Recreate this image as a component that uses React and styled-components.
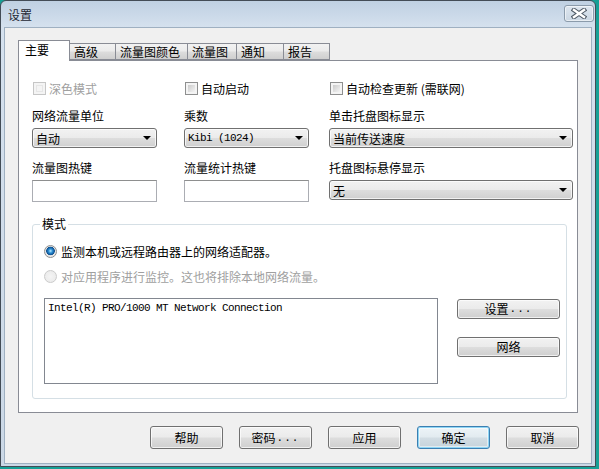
import React from 'react';
import styled, { createGlobalStyle, css } from 'styled-components';

const GlobalStyle = createGlobalStyle`
  html, body {
    margin: 0;
    padding: 0;
    background: #16a096;
  }
  body {
    font-family: "Noto Sans CJK SC", "Noto Sans", sans-serif;
    font-size: 12px;
    color: #000;
  }
  * { box-sizing: border-box; }
`;

const CJK = `"Noto Sans CJK SC", "Noto Sans", sans-serif`;
const MONO = `"Liberation Mono", "DejaVu Sans Mono", monospace`;

const btnFace = css`
  border: 1px solid #707070;
  border-radius: 3px;
  background: linear-gradient(#f2f2f2 0%, #ebebeb 48%, #dddddd 52%, #cfcfcf 100%);
  box-shadow: inset 0 0 0 1px rgba(255, 255, 255, 0.7);
`;

const Window = styled.div`
  width: 596px;
  height: 467px;
  border: 1px solid #434c56;
  border-radius: 6px 6px 0 0;
  background: linear-gradient(#bfd0e2 0px, #d5e1ee 26px, #cbd8e6 100%);
  padding: 0 3px 2px 3px;
  display: flex;
  flex-direction: column;
`;

const TitleBar = styled.div`
  height: 26px;
  display: flex;
  justify-content: space-between;
  align-items: flex-start;
  padding-left: 4px;
`;

const Title = styled.div`
  line-height: 16px;
  margin-top: 6px;
  color: #1e2833;
`;

const CloseBtn = styled.div`
  width: 30px;
  height: 17px;
  margin-top: 4px;
  margin-right: -2px;
  border: 1px solid #8b9bab;
  border-radius: 3px;
  background: linear-gradient(#dde6ef, #cbd7e3);
  box-shadow: inset 0 0 0 1px rgba(255, 255, 255, 0.55);
  display: flex;
  align-items: center;
  justify-content: center;
`;

const Client = styled.div`
  flex: 1;
  border: 1px solid #9fb0c1;
  background: #f0f0f0;
  padding: 12px 13px 0 13px;
  display: flex;
  flex-direction: column;
`;

const TabStrip = styled.div`
  display: flex;
  align-items: flex-end;
  height: 20px;
  position: relative;
  z-index: 1;
`;

const Tab = styled.div`
  width: ${p => p.$w}px;
  height: ${p => (p.$active ? 21 : 17)}px;
  margin-left: ${p => (p.$first ? 0 : -1)}px;
  margin-bottom: ${p => (p.$active ? -1 : 0)}px;
  border: 1px solid #898c95;
  border-bottom: ${p => (p.$active ? 'none' : '1px solid #898c95')};
  background: ${p => (p.$active
    ? '#fff'
    : 'linear-gradient(#f2f2f2 0%, #ebebeb 48%, #dddddd 52%, #cfcfcf 100%)')};
  padding-left: ${p => (p.$active ? 6 : 4)}px;
  padding-top: ${p => (p.$active ? 1 : 0)}px;
  line-height: 16px;
  white-space: nowrap;
`;

const Panel = styled.div`
  width: 560px;
  height: 353px;
  background: #fff;
  border: 1px solid #898c95;
  padding: 19px 10px 13px 13px;
  display: flex;
  flex-direction: column;
`;

const Grid = styled.div`
  display: grid;
  grid-template-columns: 152px 145px 244px;
  row-gap: 12px;
`;

const Check = styled.label`
  display: flex;
  align-items: center;
  gap: 3px;
  height: 16px;
  color: ${p => (p.$disabled ? '#a0a0a0' : '#000')};
  padding-left: 1px;
`;

const CheckBox = styled.span`
  width: 13px;
  height: 13px;
  border: 1px solid ${p => (p.$disabled ? '#c6c6c6' : '#8e8f8f')};
  background: #f4f4f4;
  position: relative;
  flex: none;
  &::after {
    content: '';
    position: absolute;
    inset: 2px;
    background: ${p => (p.$disabled
      ? '#f4f4f4'
      : 'linear-gradient(135deg, #cbcbcb, #f4f4f4)')};
    border: ${p => (p.$disabled ? '1px solid #e6e6e6' : 'none')};
  }
`;

const Field = styled.div`
  display: flex;
  flex-direction: column;
  gap: 4px;
`;

const Label = styled.div`
  line-height: 16px;
  height: 16px;
`;

const Select = styled.div`
  ${btnFace};
  width: ${p => p.$w}px;
  height: 20px;
  display: flex;
  align-items: center;
  justify-content: space-between;
  padding: 0 5px 0 3px;
  font-family: ${p => (p.$mono ? MONO : CJK)};
  font-size: ${p => (p.$mono ? '11px' : '12px')};
  letter-spacing: ${p => (p.$mono ? '-0.6px' : '0')};
  white-space: nowrap;
`;

const Arrow = styled.span`
  width: 0;
  height: 0;
  border-left: 4px solid transparent;
  border-right: 4px solid transparent;
  border-top: 4px solid #000;
`;

const TextInput = styled.div`
  width: 125px;
  height: 22px;
  border: 1px solid #abadb3;
  border-top-color: #8e8f8f;
  background: #fff;
`;

const Group = styled.div`
  margin-top: 22px;
  width: 535px;
  height: 175px;
  border: 1px solid #d5dfe5;
  border-radius: 3px;
  position: relative;
  padding: 18px 0 14px 11px;
  display: flex;
  flex-direction: column;
`;

const Legend = styled.div`
  position: absolute;
  top: -9px;
  left: 7px;
  padding: 0 2px;
  background: #fff;
  line-height: 16px;
`;

const Radio = styled.div`
  display: flex;
  align-items: center;
  gap: 4px;
  height: 16px;
  margin-bottom: ${p => p.$mb || 0}px;
  color: ${p => (p.$disabled ? '#a0a0a0' : '#000')};
`;

const RadioDot = styled.span`
  width: 13px;
  height: 13px;
  border-radius: 50%;
  flex: none;
  border: 1px solid ${p => (p.$disabled ? '#cbcbcb' : '#8e8f8f')};
  background: ${p => (p.$checked
    ? 'radial-gradient(circle at 50% 45%, #b6ecff 0px, #2c8ed4 2px, #0d4f8f 4px, #e4e4e4 4.6px, #f8f8f8 100%)'
    : p.$disabled
      ? 'radial-gradient(circle, #f4f4f4 0%, #ececec 70%, #f6f6f6 100%)'
      : 'radial-gradient(circle, #cfcfcf 0%, #f4f4f4 100%)')};
`;

const ListRow = styled.div`
  display: flex;
  align-items: flex-start;
  gap: 19px;
  margin-top: 14px;
`;

const ListBox = styled.div`
  flex: none;
  width: 394px;
  height: 86px;
  border: 1px solid #828790;
  background: #fff;
  padding: 2px 3px;
  font-family: ${MONO};
  font-size: 11px;
  letter-spacing: -0.6px;
  line-height: 14px;
  white-space: nowrap;
`;

const SideButtons = styled.div`
  flex: none;
  display: flex;
  flex-direction: column;
  gap: 18px;
  padding-top: 1px;
`;

const Button = styled.div`
  ${btnFace};
  flex: none;
  width: ${p => p.$w || 73}px;
  height: ${p => p.$h || 23}px;
  display: flex;
  align-items: center;
  justify-content: center;
  line-height: 16px;
  white-space: nowrap;
  ${p => p.$default && css`
    border-color: #3c7fb1;
    box-shadow: inset 0 0 0 1px #8fd6f5, inset 0 0 0 2px rgba(255, 255, 255, 0.5);
    background: linear-gradient(#edf4f8 0%, #e2ebf0 48%, #d2dde4 52%, #c6d3db 100%);
  `}
`;

const Dots = styled.span`
  font-family: ${MONO};
  font-size: 11px;
  letter-spacing: 1px;
  margin-left: 1px;
`;

const ButtonRow = styled.div`
  display: flex;
  justify-content: flex-end;
  gap: 16px;
  margin-top: 13px;
  margin-right: -1px;
`;

const tabs = [
  ['主要', 52],
  ['高级', 47],
  ['流量图颜色', 73],
  ['流量图', 50],
  ['通知', 48],
  ['报告', 47],
];

export default function App() {
  return (
    <>
      <GlobalStyle />
      <Window>
        <TitleBar>
          <Title>设置</Title>
          <CloseBtn>
            <svg width="16" height="11" viewBox="0 0 16 11">
              <path d="M3 2 L13 9 M13 2 L3 9" stroke="#4e5965" strokeWidth="4.5" strokeLinecap="square" />
              <path d="M3 2 L13 9 M13 2 L3 9" stroke="#fff" strokeWidth="2.5" strokeLinecap="square" />
            </svg>
          </CloseBtn>
        </TitleBar>
        <Client>
          <TabStrip>
            {tabs.map(([t, w], i) => (
              <Tab key={t} $w={w} $first={i === 0} $active={i === 0}>{t}</Tab>
            ))}
          </TabStrip>
          <Panel>
            <Grid>
              <Check $disabled><CheckBox $disabled />深色模式</Check>
              <Check><CheckBox />自动启动</Check>
              <Check><CheckBox />自动检查更新 (需联网)</Check>

              <Field>
                <Label>网络流量单位</Label>
                <Select $w={125}>自动<Arrow /></Select>
              </Field>
              <Field>
                <Label>乘数</Label>
                <Select $w={125} $mono>Kibi (1024)<Arrow /></Select>
              </Field>
              <Field>
                <Label>单击托盘图标显示</Label>
                <Select $w={244}>当前传送速度<Arrow /></Select>
              </Field>

              <Field>
                <Label>流量图热键</Label>
                <TextInput />
              </Field>
              <Field>
                <Label>流量统计热键</Label>
                <TextInput />
              </Field>
              <Field>
                <Label>托盘图标悬停显示</Label>
                <Select $w={244}>无<Arrow /></Select>
              </Field>
            </Grid>

            <Group>
              <Legend>模式</Legend>
              <Radio $mb={9}><RadioDot $checked />监测本机或远程路由器上的网络适配器。</Radio>
              <Radio $disabled><RadioDot $disabled />对应用程序进行监控。这也将排除本地网络流量。</Radio>
              <ListRow>
                <ListBox>Intel(R) PRO/1000 MT Network Connection</ListBox>
                <SideButtons>
                  <Button $w={103} $h={20}>设置<Dots>...</Dots></Button>
                  <Button $w={103} $h={20}>网络</Button>
                </SideButtons>
              </ListRow>
            </Group>
          </Panel>
          <ButtonRow>
            <Button>帮助</Button>
            <Button>密码<Dots>...</Dots></Button>
            <Button>应用</Button>
            <Button $default>确定</Button>
            <Button>取消</Button>
          </ButtonRow>
        </Client>
      </Window>
    </>
  );
}
